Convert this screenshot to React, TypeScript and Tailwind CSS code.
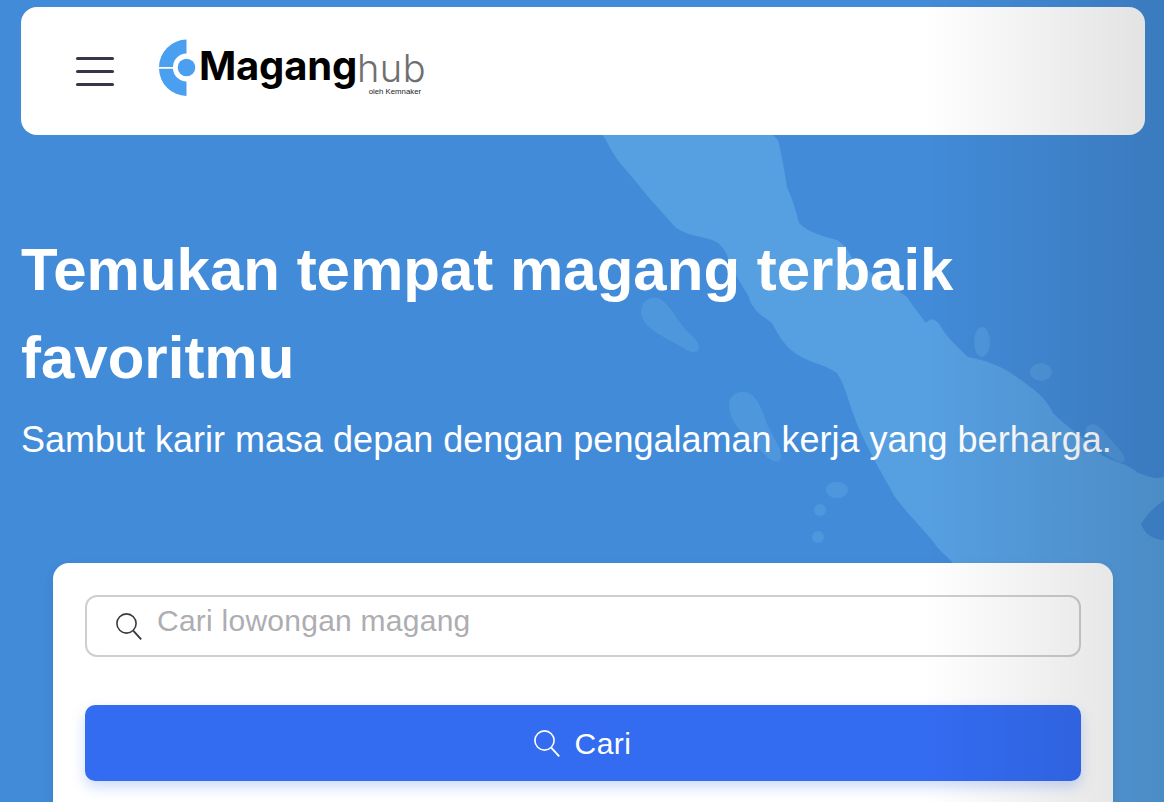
import React from "react";

const sans = "font-['Liberation_Sans',Arial,sans-serif]";

function SearchIcon({ className }: { className: string }) {
  return (
    <svg viewBox="0 0 26 27" fill="none" stroke="currentColor" strokeWidth="1.6" className={className}>
      <circle cx="10.5" cy="10.5" r="9.6" />
      <path d="M17.4 17.8 25.2 26.4" strokeWidth="1.9" />
    </svg>
  );
}

function MapBackdrop() {
  return (
    <svg viewBox="0 0 1164 802" className="absolute inset-0 h-full w-full" fill="#569fe1">
      {/* Sumatra */}
      <path
        d="M600 132 L606 140 C615 160 628 172 637 183 C650 200 664 214 675 227 C690 238 708 236 718 243 C726 250 726 254 729 260 C735 275 742 285 749 297 C752 310 762 316 772 323 C778 335 784 344 791 350 C805 362 825 364 837 373 C845 385 848 400 853 413 C862 440 880 470 895 497 C908 515 925 530 937 547 C945 556 952 560 958 570 L958 802 L1164 802 L1164 540 C1155 540 1145 535 1141 524 C1150 510 1158 505 1164 500 L1164 477 C1155 480 1148 476 1138 473 C1125 462 1112 462 1099 453 C1085 438 1068 428 1053 413 C1045 395 1028 385 1011 373 C998 365 985 360 968 357 C955 345 945 335 940 325 C935 318 930 318 926 323 C920 315 912 305 907 297 C890 285 870 272 853 260 C848 250 845 245 837 240 C822 236 808 232 799 223 C796 210 792 198 787 187 C784 170 782 155 778 140 L770 132 Z"
      />
      {/* Simeulue, Nias and the smaller islands sit paler in the picture */}
      <g fill="#4f97dd">
        <path d="M641 312 C641 300 652 295 660 299 C670 305 676 318 684 328 C692 336 700 342 699 349 C696 354 688 352 682 347 C670 340 641 328 641 312 Z" />
        <path d="M729 405 C729 394 740 389 749 393 C758 398 762 410 767 424 C772 436 782 448 781 458 C778 464 772 462 766 456 C750 440 729 425 729 405 Z" />
        <ellipse cx="837" cy="490" rx="11" ry="8" />
        <ellipse cx="820" cy="510" rx="6" ry="6" />
        <ellipse cx="818" cy="537" rx="6" ry="6" />
        <ellipse cx="982" cy="342" rx="8" ry="15" />
        <ellipse cx="1041" cy="372" rx="11" ry="9" />
        <path d="M1086 428 C1092 420 1100 426 1106 434 C1114 444 1128 456 1124 462 C1116 464 1104 452 1096 446 C1090 440 1084 436 1086 428 Z" />
      </g>
    </svg>
  );
}

function Logo() {
  return (
    <div className="mt-[-6px] flex items-center">
      <svg viewBox="0 0 37 58" className="h-[58px] w-[37px] shrink-0">
        <path d="M27.5 0.5 A28 28 0 0 0 0 28 L14 28 A13.5 13.5 0 0 1 27.5 14.5 Z" fill="#4a9ff0" />
        <path d="M0 29.8 A28 28 0 0 0 27.5 57 L27.5 42.5 A13.5 13.5 0 0 1 14 29.8 Z" fill="#4a9ff0" />
        <circle cx="27.5" cy="28.5" r="8.8" fill="#4a9ff0" />
      </svg>
      <div className="relative ml-[3px] flex items-baseline font-['Inter',sans-serif] leading-none">
        <span className="relative top-[-2px] text-[40px] font-bold tracking-[-0.2px] text-black">Magang</span>
        <span className="text-[38px] font-light tracking-[0.5px] text-[#6f6f6f]">hub</span>
        <span className="absolute right-[5px] top-[40px] whitespace-nowrap font-['Liberation_Sans',sans-serif] text-[7.8px] leading-none text-[#222]">
          oleh Kemnaker
        </span>
      </div>
    </div>
  );
}

export default function App() {
  return (
    <div className={`relative h-[802px] w-full overflow-hidden bg-[#428bd8] ${sans}`}>
      <MapBackdrop />

      <div className="relative flex flex-col pl-[21px] pr-[19px] pt-[7px]">
        {/* Navbar */}
        <header className="flex h-[128px] items-center rounded-[16px] bg-white pl-[55px]">
          <button aria-label="menu" className="mr-[45px] flex h-[29px] w-[38px] flex-col justify-between">
            <span className="h-[3px] w-full rounded-full bg-[#37374a]" />
            <span className="h-[3px] w-full rounded-full bg-[#37374a]" />
            <span className="h-[3px] w-full rounded-full bg-[#37374a]" />
          </button>
          <Logo />
        </header>

        {/* Hero */}
        <h1 className="mt-[91px] text-[60px] font-bold leading-[88px] text-white">
          Temukan tempat magang terbaik favoritmu
        </h1>
        <p className="mt-[16px] whitespace-nowrap text-[36px] leading-[44px] text-white">
          Sambut karir masa depan dengan pengalaman kerja yang berharga.
        </p>

        {/* Search card */}
        <section className="ml-[32px] mr-[32px] mt-[101px] flex h-[300px] flex-col gap-[48px] rounded-[16px] bg-white p-[32px] shadow-[0_4px_12px_rgba(0,0,0,0.08)]">
          <div className="flex h-[62px] items-start gap-[15px] rounded-[12px] border-2 border-[#cfcfcf] pl-[29px]">
            <SearchIcon className="mt-[16px] h-[27px] w-[26px] shrink-0 text-[#3a3a42]" />
            <span className="mt-[3px] text-[30px] leading-[42px] tracking-[0.25px] text-[#adadb2]">Cari lowongan magang</span>
          </div>
          <button className="flex h-[76px] items-center justify-center gap-[14px] rounded-[10px] bg-[#336bf1] text-[30px] tracking-[0.5px] text-white shadow-[0_6px_14px_rgba(51,107,241,0.25)]">
            <SearchIcon className="h-[27px] w-[26px] shrink-0 text-white" />
            <span>Cari</span>
          </button>
        </section>
      </div>

      {/* Soft shading down the right edge, over everything */}
      <div className="pointer-events-none absolute inset-y-0 right-0 w-[240px] bg-gradient-to-r from-transparent to-black/12" />
    </div>
  );
}
